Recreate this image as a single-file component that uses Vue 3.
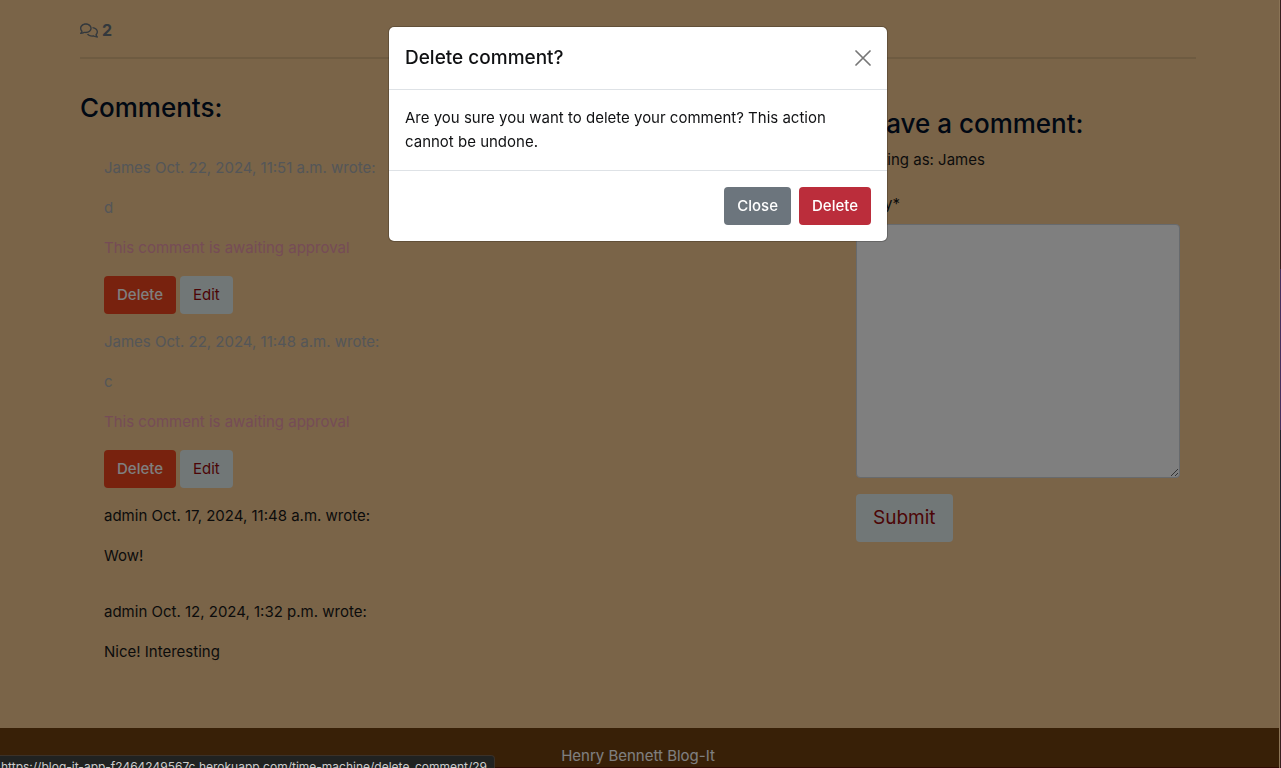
<script setup>
import { ref } from 'vue'

const body = ref('')
const open = ref(true)
const comments = [
  { id: 4, head: 'James Oct. 22, 2024, 11:51 a.m. wrote:', text: 'd', pending: true },
  { id: 3, head: 'James Oct. 22, 2024, 11:48 a.m. wrote:', text: 'c', pending: true },
  { id: 2, head: 'admin Oct. 17, 2024, 11:48 a.m. wrote:', text: 'Wow!', pending: false },
  { id: 1, head: 'admin Oct. 12, 2024, 1:32 p.m. wrote:', text: 'Nice! Interesting', pending: false },
]
</script>

<template>
  <div class="page">
    <main class="container">
      <div class="count">
        <svg viewBox="0 0 640 512" aria-hidden="true"><path fill="currentColor" d="M88.200 309.100c9.800-18.300 6.800-40.800-7.500-55.800C59.400 230.900 48 204 48 176c0-63.500 63.800-128 160-128s160 64.500 160 128s-63.800 128-160 128c-13.100 0-25.800-1.300-37.800-3.600c-10.400-2-21.200-.6-30.700 4.200c-4.100 2.100-8.300 4.100-12.600 6c-16 7.200-32.900 13.500-49.900 18c2.800-4.600 5.400-9.100 7.900-13.600c1.100-1.900 2.200-3.900 3.200-5.900zM208 352c114.900 0 208-78.800 208-176S322.900 0 208 0S0 78.800 0 176c0 41.800 17.200 80.100 45.900 110.300c-.9 1.700-1.900 3.500-2.800 5.100c-10.300 18.400-22.300 36.500-36.600 52.100c-6.600 7-8.300 17.200-4.600 25.900C5.800 378.300 14.400 384 24 384c43 0 86.500-13.300 122.700-29.700c4.800-2.200 9.600-4.500 14.200-6.800c15.100 3 30.900 4.500 47.100 4.500zM432 480c16.200 0 31.900-1.600 47.100-4.500c4.600 2.300 9.400 4.600 14.200 6.800C529.500 498.700 573 512 616 512c9.600 0 18.200-5.700 22-14.500c3.800-8.800 2-19-4.600-25.900c-14.200-15.600-26.200-33.700-36.600-52.100c-.9-1.700-1.900-3.400-2.800-5.100C622.800 384.100 640 345.800 640 304c0-94.400-87.900-171.500-198.200-175.800c4.100 15.200 6.200 31.200 6.200 47.800l0 .6c87.200 6.700 144 67.500 144 127.400c0 28-11.400 54.900-32.700 77.200c-14.300 15-17.300 37.600-7.500 55.800c1.100 2 2.200 4 3.200 5.900c2.500 4.500 5.200 9 7.900 13.600c-17-4.500-33.900-10.700-49.900-18c-4.300-1.900-8.500-3.900-12.600-6c-9.500-4.800-20.300-6.200-30.700-4.200c-12.100 2.400-24.800 3.600-37.800 3.600c-61.700 0-110-26.500-136.800-62.300c-16 5.400-32.800 9.400-50 11.800C279 439.800 350 480 432 480z"/></svg>
        <strong>2</strong>
      </div>
      <hr>
      <div class="row">
        <section class="comments">
          <h3>Comments:</h3>
          <div class="list">
            <article v-for="c in comments" :key="c.id" :class="{ pending: c.pending }">
              <p>{{ c.head }}</p>
              <p>{{ c.text }}</p>
              <template v-if="c.pending">
                <p class="notice">This comment is awaiting approval</p>
                <div class="actions">
                  <button type="button" class="btn remove" @click="open = true">Delete</button>
                  <button type="button" class="btn edit">Edit</button>
                </div>
              </template>
            </article>
          </div>
        </section>
        <form class="leave" @submit.prevent>
          <h3>Leave a comment:</h3>
          <p>Posting as: James</p>
          <label for="comment-body">Body*</label>
          <textarea id="comment-body" v-model="body" rows="10"></textarea>
          <button type="submit" class="btn edit large">Submit</button>
        </form>
      </div>
    </main>
    <footer>Henry Bennett Blog-It</footer>

    <div v-if="open" class="backdrop">
      <div class="modal" role="dialog" aria-modal="true" aria-labelledby="modal-title">
        <header>
          <h5 id="modal-title">Delete comment?</h5>
          <button type="button" class="close" aria-label="Close" @click="open = false">
            <svg viewBox="0 0 16 16" aria-hidden="true"><path d="M1 1L15 15M15 1L1 15" stroke="currentColor" stroke-width="1.700" stroke-linecap="round"/></svg>
          </button>
        </header>
        <div class="modal-body">Are you sure you want to delete your comment? This action cannot be undone.</div>
        <div class="modal-footer">
          <button type="button" class="btn secondary" @click="open = false">Close</button>
          <a href="#" class="btn danger">Delete</a>
        </div>
      </div>
    </div>
    <div class="edge"></div>
    <div class="status">https://blog-it-app-f2464249567c.herokuapp.com/time-machine/delete_comment/29</div>
  </div>
</template>

<style>
html, body { margin: 0; overflow: hidden; }
</style>

<style scoped>
* { box-sizing: border-box; }
.page {
  min-height: 100vh;
  background: #f4c890;
  color: #181818;
  font: 400 15px/24px Inter, "Liberation Sans", sans-serif;
}
p, h3, h5 { margin: 0; }
h3 { font-size: 26px; line-height: 34px; font-weight: 500; color: #001028; }
.container { max-width: 1145px; margin: 0 auto; padding: 18px 17px 0 12px; }
.count { display: flex; align-items: center; gap: 4px; color: #66707a; font-size: 16px; }
.count svg { width: 18px; height: 15px; }
hr { height: 2px; margin: 15px 0 0; border: 0; background: #dcb782; }
.row { display: grid; grid-template-columns: 2fr 1fr; margin: 0 -12px; padding-bottom: 32px; }
.comments { padding: 32px 12px 0; }
.list { padding: 31px 24px 0; }
article { display: flex; flex-direction: column; gap: 16px; padding-bottom: 32px; }
article.pending { padding-bottom: 16px; color: #a8acb0; }
.notice { color: #ec98ac; }
.actions { display: flex; gap: 4px; }
.leave { display: flex; flex-direction: column; align-items: flex-start; padding: 48px 28px 0; }
.leave p { margin-top: 7px; }
.leave label { margin-top: 20px; margin-bottom: 8px; }
textarea {
  width: 100%;
  height: 254px;
  padding: 6px 12px;
  border: 1px solid #ced4da;
  border-radius: 4px;
  background: #fff;
  font: inherit;
  resize: vertical;
}
.btn {
  display: block;
  padding: 6px 12px;
  border: 1px solid transparent;
  border-radius: 4px;
  font: inherit;
  text-decoration: none;
  color: #fff;
}
.remove { background: #f0441c; font-weight: 500; }
.edit { background: #e2eeee; color: #980a0c; }
.large { margin-top: 16px; padding: 8px 16px; font-size: 19px; line-height: 30px; }
footer { height: 40px; padding: 16px 5px 0 0; border-bottom: 1px solid #5c1608; text-align: center; background: #70400f; color: #fff; }
.backdrop { position: fixed; inset: 0; padding: 26px 5px 0 0; background: rgba(0, 0, 0, 0.5); }
.modal {
  max-width: 500px;
  margin: 0 auto;
  border: 1px solid rgba(0, 0, 0, 0.2);
  border-radius: 6px;
  background: #fff;
  background-clip: padding-box;
  color: #101113;
}
.modal header { display: flex; align-items: center; justify-content: space-between; padding: 16px; border-bottom: 1px solid #dee2e6; }
h5 { font-size: 19px; line-height: 30px; font-weight: 500; }
.close { display: flex; padding: 0; border: 0; background: none; color: #777; }
.close svg { width: 16px; height: 16px; }
.modal-body { padding: 16px; }
.modal-footer { display: flex; justify-content: flex-end; gap: 8px; padding: 16px; border-top: 1px solid #dee2e6; }
.secondary { background: #6c757d; font-weight: 500; }
.danger { background: #bb2d3b; font-weight: 500; }
.edge {
  position: fixed;
  inset: 0 0 0 auto;
  width: 2px;
  border-left: 1px solid #8b7557;
  background: linear-gradient(#382020 0 35%, #46305e 35% 56%, #24242e 56% 75%, #382020 75%);
}
.status {
  position: fixed;
  left: 0;
  bottom: -11px;
  padding: 2px 7px 2px 1px;
  border: 1px solid #3b3128;
  border-left: 0;
  border-radius: 0 4px 4px 0;
  background: #202221;
  color: #ccc;
  font-size: 12px;
  line-height: 18px;
  white-space: nowrap;
}
</style>
